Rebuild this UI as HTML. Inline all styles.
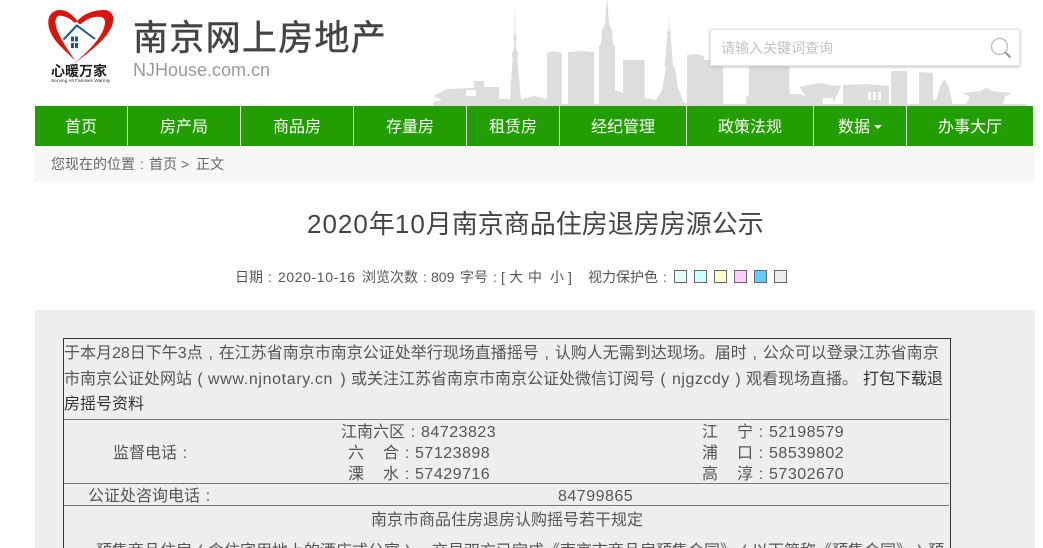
<!DOCTYPE html>
<html lang="zh"><head><meta charset="utf-8"><title>2020年10月南京商品住房退房房源公示</title>
<style>
html,body{margin:0;padding:0;width:1043px;height:548px;overflow:hidden;background:#fff}
body{position:relative;font-family:"Liberation Sans","Noto Sans CJK SC",sans-serif;color:#555;font-size:16px;text-spacing-trim:space-all}
.a{position:absolute;white-space:nowrap}
.nav{position:absolute;left:35px;top:106px;width:998px;height:40px;background:#229e02}
.nav span{position:absolute;top:3px;height:37px;line-height:38px;color:#fff;font-size:16px;text-align:center}
.nav i{position:absolute;top:0;width:1px;height:40px;background:#d8e8d0}
.t{position:absolute;white-space:nowrap;line-height:22px;height:22px}
.m{position:absolute;white-space:nowrap;line-height:20px;height:20px;font-size:14px;top:267px;color:#555}
.n{letter-spacing:.5px}
.p{display:inline-block;width:1em;text-align:center}
.sw{position:absolute;top:270px;width:11px;height:11px;border:1px solid #666}
.l{position:absolute;height:1px;left:64px;width:885px;background:#777}
</style></head><body>

<svg class="a" style="left:431px;top:0" width="600" height="106" viewBox="431 0 600 106" fill="#ddd">
<path d="M433 106V102L442 100 433 96 447 89 474 88V81H484V87H499V99H510L512.500 60 511.500 54 514 49 514.300 41 513 38 514.700 33 514.800 10H515.300L515.500 33 517 38 516 41 516.300 49 518.500 54 517.500 60 521 99 534 96 547 99V53L554 51 562 53V104H568V52L581 51 594 52V104H599V46L601 44 602 30 605 24 606.600 0H607.400L609 24 612 30 613 44 615 46V90L623 93V60H644.500V98L656 100 662 90 666 68 664.500 66 667.500 35 666.500 33 668.500 30 669 10 669.500 30 671.500 33 670.500 35 673 66 675 68 678 88 684 103H687V55L696 54 704 56V60H723V104H746V97L749 96V66H789.500V94L799 94 806 96 799 87 820 83 830 85 841 86 833 104H843V85L865 84 889 86V104H891V71L907 71V104H919V72L933 73V100L936 100 941 85 944 79 948 85 952 100V104H966L970 97 962 93 980 91 986 88 992 91 1012 93 1005 97 1003 104H1026V106Z"/>
<path fill="#fff" d="M466 90h10v6h-10zM726 99h18v2h-18zM823 98h10v6h-10zM868 92h3v8h-3zM873 92h3v8h-3zM878 92h3v8h-3z"/>
</svg>

<svg class="a" style="left:47px;top:8px" width="68" height="58" viewBox="47 8 68 58">
<path fill="#d9160c" d="M75.500 61C65 50 48 38 48.300 22 48.500 13 55 10 60 10 67 10 73 15 77.300 21L75 23C71 19 65 15.700 60 15.700 57 15.700 55.500 18 55.500 22 55.500 32 66 47 75.500 61Z"/>
<path fill="#d9160c" d="M76.700 21.700C82 15 92 10 104 10 110 10 113.500 14 113.300 19 113 33 98 46 72 65 82 57 104 38 105 23 105.500 18 102 16.700 98 16.700 92 16.700 86 19.500 80 24.500Z"/>
<path fill="none" stroke="#1c5c86" stroke-width="2" d="M63.500 39.500 76.800 25.500 95 39"/>
<path fill="#1c5c86" d="M71 36.500h3v5h-3zM75 36.500h3v5h-3zM71 43h3v5h-3zM75 43h3v5h-3z"/>
</svg>
<div class="a" style="left:51px;top:64px;width:56px;text-align:center;font-size:14px;line-height:14px;font-weight:700;color:#222">心暖万家</div>
<div class="a" style="left:51px;top:79px;font-size:6px;line-height:6px;color:#333;transform:scale(.8);transform-origin:0 0">Serving All Families Warmly</div>

<div class="a" style="left:133px;top:17px;font-size:35px;line-height:44px;letter-spacing:1.300px;color:#444;-webkit-text-stroke:.5px #444">南京网上房地产</div>
<div class="a" style="left:133px;top:60px;font-size:18px;line-height:20px;color:#999">NJHouse.com.cn</div>

<div class="a" style="left:710px;top:29px;width:308px;height:35px;background:#fff;border:1px solid #e6e6e6;box-shadow:0 1px 3px #bbb"></div>
<div class="a" style="left:721px;top:38px;font-size:14px;line-height:20px;color:#c2c2c2">请输入关键词查询</div>
<svg class="a" style="left:989px;top:36px" width="24" height="24" viewBox="0 0 24 24" fill="none"><circle cx="10.500" cy="10.500" r="8" stroke="#bbb" stroke-width="1.300"/><path d="M16 16l5.500 5.500" stroke="#999" stroke-width="2"/></svg>

<div class="nav">
<span style="left:0;width:92px">首页</span><i style="left:92px"></i>
<span style="left:93px;width:112px">房产局</span><i style="left:205px"></i>
<span style="left:206px;width:112px">商品房</span><i style="left:318px"></i>
<span style="left:319px;width:112px">存量房</span><i style="left:431px"></i>
<span style="left:432px;width:92px">租赁房</span><i style="left:524px"></i>
<span style="left:525px;width:126px">经纪管理</span><i style="left:651px"></i>
<span style="left:652px;width:126px">政策法规</span><i style="left:778px"></i>
<span style="left:803px;width:32px">数据</span><b class="a" style="left:839px;top:19px;border:4px solid transparent;border-top-color:#fff;border-bottom:0"></b><i style="left:871px"></i>
<span style="left:872px;width:126px">办事大厅</span>
</div>

<div class="a" style="left:35px;top:146px;width:1000px;height:36px;background:#f7f7f7"></div>
<div class="a" style="left:51px;top:154px;font-size:14px;line-height:20px;color:#666">您现在的位置<span class="p">:</span>首页</div>
<div class="a" style="left:181px;top:154px;font-size:14px;line-height:20px;color:#666">&gt;</div>
<div class="a" style="left:196px;top:154px;font-size:14px;line-height:20px;color:#666">正文</div>

<div class="a" style="left:307px;top:205px;font-size:26px;line-height:38px;color:#444"><span style="letter-spacing:1px">2020</span>年<span style="letter-spacing:1px">10</span>月南京商品住房退房房源公示</div>

<div class="m" style="left:235px">日期<span class="p">:</span></div>
<div class="m" style="left:278px;letter-spacing:.6px">2020-10-16</div>
<div class="m" style="left:362px">浏览次数<span class="p">:</span></div>
<div class="m" style="left:431px">809</div>
<div class="m" style="left:460px">字号<span class="p">:</span></div>
<div class="m" style="left:501px">[</div>
<div class="m" style="left:509px">大</div>
<div class="m" style="left:528px">中</div>
<div class="m" style="left:550px">小</div>
<div class="m" style="left:568px">]</div>
<div class="m" style="left:588px">视力保护色<span class="p">:</span></div>
<div class="sw" style="left:674px;background:#e6ffff"></div>
<div class="sw" style="left:694px;background:#ccffff"></div>
<div class="sw" style="left:714px;background:#ffffcc"></div>
<div class="sw" style="left:734px;background:#ffccff"></div>
<div class="sw" style="left:754px;background:#66ccff"></div>
<div class="sw" style="left:774px;background:#eee"></div>

<div class="a" style="left:35px;top:310px;width:1000px;height:238px;background:#eee"></div>
<div class="a" style="left:63px;top:338px;width:886px;height:220px;border:1px solid #333"></div>
<div class="l" style="top:419px"></div>
<div class="l" style="top:483px"></div>
<div class="l" style="top:505px"></div>

<div class="t" style="left:64px;top:343px">于本月28日下午3点<span class="p">,</span>在江苏省南京市南京公证处举行现场直播摇号<span class="p">,</span>认购人无需到达现场。届时<span class="p">,</span>公众可以登录江苏省南京</div>
<div class="t" style="left:64px;top:369px">市南京公证处网站</div>
<div class="t" style="left:192px;top:369px;width:16px;text-align:center">(</div>
<div class="t" style="left:208px;top:369px;letter-spacing:.65px">www.njnotary.cn</div>
<div class="t" style="left:335px;top:369px;width:16px;text-align:center">)</div>
<div class="t" style="left:351px;top:369px">或关注江苏省南京市南京公证处微信订阅号</div>
<div class="t" style="left:655px;top:369px;width:16px;text-align:center">(</div>
<div class="t" style="left:672px;top:369px;letter-spacing:.5px">njgzcdy</div>
<div class="t" style="left:730px;top:369px;width:16px;text-align:center">)</div>
<div class="t" style="left:746px;top:369px">观看现场直播。</div>
<div class="t" style="left:863px;top:369px;color:#333">打包下载退</div>
<div class="t" style="left:64px;top:394px;color:#333">房摇号资料</div>

<div class="t" style="left:113px;top:443px">监督电话<span class="p">:</span></div>
<div class="t" style="left:341px;top:422px">江南六区<span class="p">:</span><span class="n">84723823</span></div>
<div class="t" style="left:348px;top:443px">六</div><div class="t" style="left:383px;top:443px">合<span class="p">:</span><span class="n">57123898</span></div>
<div class="t" style="left:348px;top:464px">溧</div><div class="t" style="left:383px;top:464px">水<span class="p">:</span><span class="n">57429716</span></div>
<div class="t" style="left:702px;top:422px">江</div><div class="t" style="left:737px;top:422px">宁<span class="p">:</span><span class="n">52198579</span></div>
<div class="t" style="left:702px;top:443px">浦</div><div class="t" style="left:737px;top:443px">口<span class="p">:</span><span class="n">58539802</span></div>
<div class="t" style="left:702px;top:464px">高</div><div class="t" style="left:737px;top:464px">淳<span class="p">:</span><span class="n">57302670</span></div>
<div class="t" style="left:88px;top:486px">公证处咨询电话<span class="p">:</span></div>
<div class="t" style="left:558px;top:486px"><span class="n">84799865</span></div>
<div class="t" style="left:371px;top:510px">南京市商品住房退房认购摇号若干规定</div>
<div class="t" style="left:96px;top:541px">预售商品住房<span class="p">(</span>含住宅用地上的酒店式公寓<span class="p">)</span><span class="p">,</span>交易双方已完成《南京市商品房预售合同》<span class="p">(</span>以下简称《预售合同》<span class="p">)</span>预</div>
</body></html>
